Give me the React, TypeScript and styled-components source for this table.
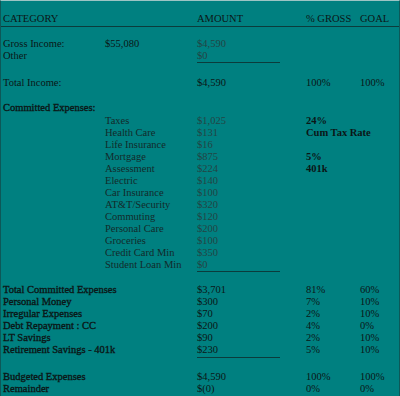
import styled, {createGlobalStyle} from 'styled-components'

const GlobalStyle = createGlobalStyle`
  html, body {
    margin: 0;
    padding: 0;
    background: #008080;
  }
`

type Tone = 'dark' | 'soft' | 'faint'

type Line = {
  label?: string
  sub?: string
  amount?: string
  pct?: string
  goal?: string
  strong?: boolean
  amountTone?: Tone
  isItem?: boolean
  rule?: boolean
}

type Block = {gap: number; lines: Line[]}

const item = (sub: string, amount: string, pct?: string): Line => ({
  sub,
  amount,
  pct,
  amountTone: 'faint',
  isItem: true,
})

const blocks: Block[] = [
  {
    gap: 11,
    lines: [
      {label: 'Gross Income:', sub: '$55,080', amount: '$4,590', amountTone: 'faint'},
      {label: 'Other', amount: '$0', amountTone: 'faint', rule: true},
    ],
  },
  {gap: 14.8, lines: [{label: 'Total Income:', amount: '$4,590', pct: '100%', goal: '100%'}]},
  {
    gap: 13,
    lines: [
      {label: 'Committed Expenses:', strong: true},
      item('Taxes', '$1,025', '24%'),
      item('Health Care', '$131', 'Cum Tax Rate'),
      item('Life Insurance', '$16'),
      item('Mortgage', '$875', '5%'),
      item('Assessment', '$224', '401k'),
      item('Electric', '$140'),
      item('Car Insurance', '$100'),
      item('AT&T/Security', '$320'),
      item('Commuting', '$120'),
      item('Personal Care', '$200'),
      item('Groceries', '$100'),
      item('Credit Card Min', '$350'),
      {...item('Student Loan Min', '$0'), rule: true},
    ],
  },
  {
    gap: 13,
    lines: [
      {label: 'Total Committed Expenses', amount: '$3,701', pct: '81%', goal: '60%', strong: true},
      {label: 'Personal Money', amount: '$300', pct: '7%', goal: '10%', strong: true},
      {label: 'Irregular Expenses', amount: '$70', pct: '2%', goal: '10%', strong: true},
      {label: 'Debt Repayment : CC', amount: '$200', pct: '4%', goal: '0%', strong: true},
      {label: 'LT Savings', amount: '$90', pct: '2%', goal: '10%', strong: true},
      {
        label: 'Retirement Savings - 401k',
        amount: '$230',
        pct: '5%',
        goal: '10%',
        strong: true,
        rule: true,
      },
    ],
  },
  {
    gap: 14,
    lines: [
      {label: 'Budgeted Expenses', amount: '$4,590', pct: '100%', goal: '100%', strong: true},
      {label: 'Remainder', amount: '$(0)', pct: '0%', goal: '0%', strong: true},
    ],
  },
]

const tones: Record<Tone, string> = {
  dark: '#0b1616',
  soft: '#132a2a',
  faint: '#234444',
}

const Sheet = styled.div`
  box-sizing: border-box;
  width: 400px;
  height: 396px;
  padding-top: 12px;
  border-top: 1px solid #9cc4c4;
  border-left: 1px solid #0d5858;
  border-right: 1px solid #0d5858;
  font-family: 'Liberation Serif', 'Times New Roman', serif;
  font-size: 10.5px;
  color: #0b1616;
`

const Row = styled.div<{$head?: boolean; $item?: boolean}>`
  display: grid;
  grid-template-columns: 102px 92px 109px 54px 1fr;
  height: ${(p) => (p.$item ? 12 : 12.2)}px;
  line-height: ${(p) => (p.$item ? 12 : 12.2)}px;
  padding-left: 2px;
  white-space: nowrap;
  ${(p) => p.$head && 'height: 13px; border-bottom: 1px solid #0b3c3c;'}
`

const Spacer = styled.div<{$h: number}>`
  height: ${(p) => p.$h}px;
`

const Cell = styled.span<{$strong?: boolean; $bold?: boolean; $tone?: Tone; $rule?: boolean}>`
  color: ${(p) => tones[p.$tone ?? 'dark']};
  font-weight: ${(p) => (p.$bold ? 'bold' : 'normal')};
  ${(p) => p.$strong && '-webkit-text-stroke: 0.35px currentColor;'}
  ${(p) => p.$rule && 'border-bottom: 1px solid #0b3c3c; margin-right: 26px;'}
`

const LineRow = ({line}: {line: Line}) => (
  <Row $item={line.isItem}>
    <Cell $strong={line.strong}>{line.label}</Cell>
    <Cell $tone={line.isItem ? 'soft' : 'dark'}>{line.sub}</Cell>
    <Cell $tone={line.amountTone} $rule={line.rule}>
      {line.amount}
    </Cell>
    <Cell $bold={line.isItem}>{line.pct}</Cell>
    <Cell>{line.goal}</Cell>
  </Row>
)

export default function App() {
  return (
    <>
      <GlobalStyle />
      <Sheet>
        <Row $head>
          <Cell>CATEGORY</Cell>
          <Cell />
          <Cell>AMOUNT</Cell>
          <Cell>% GROSS</Cell>
          <Cell>GOAL</Cell>
        </Row>
        {blocks.map((block, i) => (
          <div key={i}>
            <Spacer $h={block.gap} />
            {block.lines.map((line, j) => (
              <LineRow key={j} line={line} />
            ))}
          </div>
        ))}
      </Sheet>
    </>
  )
}
